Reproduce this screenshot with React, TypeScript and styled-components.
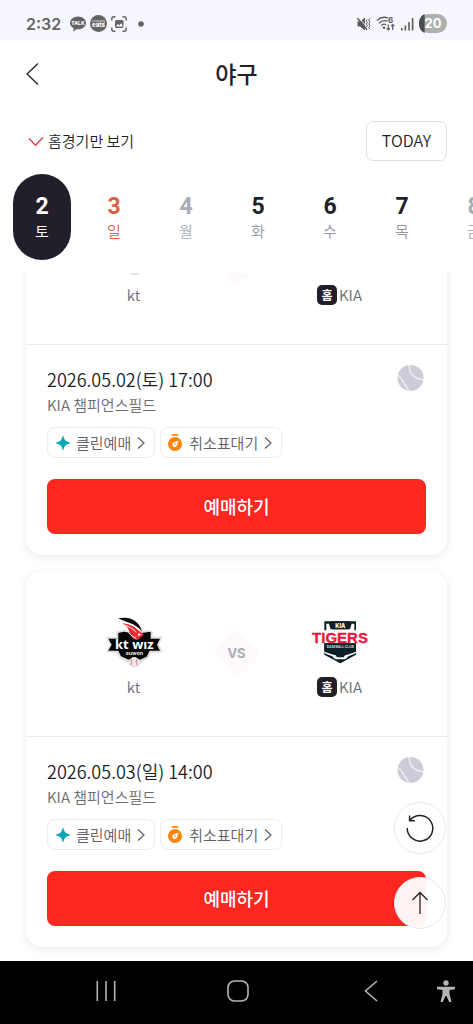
import { useLayoutEffect, useRef, useState } from "react";
import styled, { createGlobalStyle } from "styled-components";

const GlobalStyle = createGlobalStyle`
  *, *::before, *::after { box-sizing: border-box; }
  body { margin: 0; background: #fff; }
  button, input { font: inherit; color: inherit; }
  button { padding: 0; border: 0; background: none; cursor: pointer; }
  svg { display: block; flex: none; }
`;

const Screen = styled.div`
  display: flex;
  flex-direction: column;
  height: 100vh;
  overflow: hidden;
  background: #fff;
  color: #221f2a;
  font-family: "Noto Sans CJK KR", "Noto Sans", sans-serif;
  font-size: 15px;
  font-weight: 350;
`;

const StatusBar = styled.div`
  display: flex;
  justify-content: space-between;
  align-items: center;
  flex: none;
  height: 40px;
  padding: 7px 26px 0;
  background: #f6f6ff;
  color: #646464;
`;

const StatusGroup = styled.div<{ $gap: number }>`
  display: flex;
  align-items: center;
  gap: ${(p) => p.$gap}px;
`;

const Clock = styled.time`
  width: 40px;
  font: 600 16px/20px Inter, sans-serif;
`;

const Header = styled.header`
  display: grid;
  grid-template-columns: 40px 1fr 40px;
  align-items: center;
  flex: none;
  height: 68px;
  padding: 0 26px;
`;

const Title = styled.h1`
  margin: 0;
  padding-bottom: 2px;
  font-size: 23px;
  line-height: 32px;
  font-weight: 500;
  text-align: center;
`;

const FilterRow = styled.div`
  display: flex;
  justify-content: space-between;
  align-items: center;
  flex: none;
  padding: 13px 26px;
`;

const FilterLabel = styled.label`
  position: relative;
  display: flex;
  align-items: center;
  gap: 4px;
  padding-left: 2px;
  line-height: 24px;
  cursor: pointer;
`;

const HiddenCheckbox = styled.input`
  position: absolute;
  opacity: 0;
  width: 16px;
  height: 16px;
  margin: 0;
`;

const TodayButton = styled.button`
  width: 81px;
  height: 40px;
  padding-bottom: 2px;
  border: 1px solid #dfdde6;
  border-radius: 7px;
  background: #fff;
  font-size: 16px;
`;

const DateStrip = styled.nav`
  display: flex;
  flex: none;
  gap: 14px;
  padding: 0 0 13px 13px;
  overflow: hidden;
`;

type Tone = "normal" | "holiday" | "off";
const numberColor = { normal: "#221f2a", holiday: "#dd5f46", off: "#a9adb7" };
const dayColor = { normal: "#96999f", holiday: "#dd5f46", off: "#a9adb7" };

const DateButton = styled.button<{ $tone: Tone; $active: boolean }>`
  display: flex;
  flex-direction: column;
  align-items: center;
  justify-content: center;
  flex: none;
  width: 58px;
  height: 86px;
  padding-top: 2px;
  border-radius: 29px;
  background: ${(p) => (p.$active ? "#221f2a" : "transparent")};
  color: ${(p) => (p.$active ? "#fff" : dayColor[p.$tone])};
  line-height: 22px;

  strong {
    color: ${(p) => (p.$active ? "#fff" : numberColor[p.$tone])};
    font: 700 23px/26px Roboto, sans-serif;
  }
`;

const Body = styled.div`
  position: relative;
  display: flex;
  flex: 1;
  min-height: 0;
`;

const GameList = styled.main`
  flex: 1;
  padding: 14px 26px;
  overflow-y: auto;
  scrollbar-width: none;
`;

const Card = styled.article`
  border-radius: 16px;
  background: #fff;
  box-shadow: 0 2px 4px 2px rgba(60, 30, 50, 0.05), 0 2px 8px 4px rgba(200, 60, 160, 0.02);

  & + & { margin-top: 16px; }
`;

const Matchup = styled.div`
  display: flex;
  justify-content: center;
  gap: 30px;
  padding: 44px 0 37px;
  border-bottom: 1px solid #ebeaf4;
`;

const Team = styled.div`
  display: flex;
  flex-direction: column;
  align-items: center;
  gap: 6px;
  width: 100px;
`;

const TeamName = styled.div`
  display: flex;
  align-items: center;
  gap: 2px;
  line-height: 24px;
  color: #6a6e75;
`;

const HomeBadge = styled.span`
  width: 20px;
  height: 20px;
  border-radius: 5px;
  background: #221f2a;
  color: #fff;
  font-size: 12px;
  font-weight: 700;
  line-height: 20px;
  text-align: center;
`;

const Versus = styled.div`
  display: grid;
  place-items: center;
  width: 46px;
  height: 46px;
  margin-top: 15px;
  color: #abadb5;
  font: 700 13px/20px Inter, sans-serif;

  &::before, span { grid-area: 1 / 1; }
  &::before {
    content: "";
    width: 36px;
    height: 36px;
    border-radius: 8px;
    background: #fdf9fd;
    transform: rotate(45deg);
  }
  span { z-index: 1; }
`;

const Info = styled.div`
  padding: 20px 21px 21px;
`;

const InfoTop = styled.div`
  display: flex;
  justify-content: space-between;
  align-items: flex-start;
`;

const DateTime = styled.div`
  font-size: 18px;
  line-height: 28px;
`;

const Venue = styled.div`
  line-height: 24px;
  color: #6a6c72;
`;

const BallIcon = styled.svg`
  margin-right: 2px;
`;

const Tags = styled.div`
  display: flex;
  gap: 5px;
  margin: 10px 0 21px;
`;

const Tag = styled.button`
  display: flex;
  align-items: center;
  gap: 5px;
  height: 31px;
  padding: 0 8px 0 7px;
  border: 1px solid #ebeaf4;
  border-radius: 8px;
  color: #5d6067;
  line-height: 24px;
`;

const BookButton = styled.button`
  display: block;
  width: 100%;
  height: 55px;
  padding-bottom: 1px;
  border-radius: 8px;
  background: #fc2820;
  color: #fff;
  font-size: 18px;
  font-weight: 500;
`;

const FloatingActions = styled.div`
  position: absolute;
  right: 27px;
  bottom: 32px;
  display: flex;
  flex-direction: column;
  gap: 23px;
`;

const RoundButton = styled.button`
  display: grid;
  place-items: center;
  width: 52px;
  height: 52px;
  border: 1px solid #e9e8f5;
  border-radius: 50%;
  background: rgba(255, 255, 255, 0.95);
`;

const SystemNav = styled.nav`
  display: grid;
  grid-template-columns: 1fr 1fr 1fr 18px;
  justify-items: center;
  align-items: center;
  flex: none;
  height: 63px;
  padding: 0 18px 3px 40px;
  background: #000;
  color: #b9b4b4;
`;

function StatusLeft() {
  return (
    <StatusGroup $gap={4}>
      <Clock>2:32</Clock>
      <svg width="16" height="16" viewBox="0 0 16 16" fill="#646464">
        <path d="M8 .5C3.6.5 0 3.4 0 6.9c0 2.300 1.500 4.200 3.700 5.300L3 15.500l3.800-2.300 1.200.100c4.400 0 8-2.900 8-6.400S12.400.5 8 .5z" />
        <text x="8" y="8.800" fill="#fff" fontSize="5" fontWeight="800" fontFamily="Inter" textAnchor="middle">TALK</text>
      </svg>
      <svg width="17" height="17" viewBox="0 0 17 17">
        <circle cx="8.500" cy="8.500" r="8.500" fill="#646464" />
        <text x="8.500" y="6.500" fill="#c8c8c8" fontSize="3" fontWeight="700" fontFamily="Inter" textAnchor="middle">coupang</text>
        <text x="8.500" y="12" fill="#fff" fontSize="6" fontWeight="800" fontFamily="Inter" textAnchor="middle">eats</text>
      </svg>
      <svg width="16" height="16" viewBox="0 0 16 16" fill="none" stroke="#646464" strokeWidth="1.500">
        <path d="M.8 4.500V3Q.8.8 3 .8h1.500M11.500.8H13q2.200 0 2.200 2.200v1.500M15.200 11.500V13q0 2.200-2.200 2.200h-1.500M4.500 15.200H3Q.8 15.200.8 13v-1.500" />
        <rect x="4" y="4" width="8.500" height="8" rx="1.500" fill="#646464" stroke="none" />
        <path d="M5 10.500l2-2.500 1.500 1.500L10.300 7l1.500 3.500z" fill="#fff" stroke="none" />
      </svg>
      <svg width="20" height="6" viewBox="0 0 20 6">
        <circle cx="10" cy="3" r="2.800" fill="#646464" />
      </svg>
    </StatusGroup>
  );
}

function StatusRight() {
  return (
    <StatusGroup $gap={5}>
      <svg width="14" height="14" viewBox="0 0 14 14" fill="none" stroke="#5a5a5a">
        <path d="M.5 4.500H3l5-4v13l-5-4H.5z" fill="#5a5a5a" stroke="none" />
        <path d="M1.500 0l10 12" stroke="#f6f6ff" strokeWidth="1" />
        <path d="M.5 1.200L10 12.800" strokeWidth="1.500" />
        <path d="M10 2.500l-.8 1.500 1.200 1.500-1.200 1.500 1.200 1.500-1.200 1.800M12.600 1.500l-.8 1.800 1.200 1.800-1.200 1.900 1.200 1.800-1.200 1.700.8 1.500" />
      </svg>
      <svg width="20" height="15" viewBox="0 0 20 15" fill="none" stroke="#5a5a5a" strokeWidth="1.300">
        <path d="M1 4.500Q6-.300 12 2M3 7.200Q6.500 3.600 11.500 5.200M5.200 9.500q2.400-2.200 5-.8" />
        <circle cx="8" cy="11.800" r="1.200" fill="#5a5a5a" stroke="none" />
        <path d="M12.300 8.500v5.500M10.600 12.300l1.700 1.700 1.700-1.700M16.700 14V8.500M15 10.200l1.700-1.700 1.700 1.700" strokeWidth="1.200" />
        <text x="12" y="6.500" fill="#5a5a5a" stroke="none" fontSize="8" fontWeight="700" fontFamily="Inter">6</text>
      </svg>
      <svg width="13" height="14" viewBox="0 0 13 14" fill="#5a5a5a">
        <rect x="0" y="11" width="1.600" height="2.500" />
        <rect x="3.600" y="8.500" width="1.600" height="5" />
        <rect x="7.200" y="5.200" width="1.600" height="8.300" />
        <rect x="10.800" y="1" width="1.600" height="12.500" />
      </svg>
      <svg width="28" height="19" viewBox="0 0 28 19">
        <rect width="28" height="19" rx="9.500" fill="#adb0af" />
        <path d="M5.600 0v19C2 17.500 0 14 0 9.500S2 1.500 5.600 0z" fill="#4c4c4c" />
        <text x="14" y="14.200" fill="#fff" fontSize="13" fontWeight="700" fontFamily="Inter" textAnchor="middle">20</text>
      </svg>
    </StatusGroup>
  );
}

function KtWizLogo() {
  return (
    <svg width="58" height="54" viewBox="45 45 174 162" role="img" aria-label="kt wiz">
      <path d="M48 110h30V94l22-4 32 4 42-4 14 6v14h30l-11 24 11 22-33 3-10 16-22 13q-20 28-38 1l-24-13-10-17-33-3 12-22z" fill="#e3dde3" />
      <path d="M55 116h30V99l16-4 26 4h28l27-4v21h28l-9 18 9 18h-31l-9 18-20 9-13-7h-8l-13 7-23-10-8-17H55l10-18z" fill="#050505" />
      <path d="M84 55q34-7 54 10 14 12 18 30-16-20-37-26-15-5-35-14z" fill="#0a0a0a" />
      <path d="M98 70q27 2 46 20l18 14-20 17q-17-2-23-22-4-18-21-29z" fill="#ee2b34" />
      <path d="M104 76q24 7 34 21M112 88q6 20 26 26" stroke="#fff" strokeWidth="3" fill="none" />
      <path d="M144 100l10 3-9 6z" fill="#fff" />
      <circle cx="132" cy="186" r="14" fill="#eee6e8" />
      <path d="M122 176q7 10 0 20M142 176q-7 10 0 20" stroke="#e04a50" strokeWidth="2" fill="none" />
      <text x="133" y="148" fill="#fff" fontSize="39" fontWeight="700" fontFamily="Open Sans" textAnchor="middle">kt wız</text>
      <text x="133" y="164" fill="#e8e8e8" fontSize="16" fontWeight="700" fontFamily="Inter" textAnchor="middle">suwon</text>
    </svg>
  );
}

function TigersLogo() {
  return (
    <svg width="58" height="54" viewBox="330 45 174 162" role="img" aria-label="KIA Tigers">
      <path d="M370 64h95v98l-47 27-48-27z" fill="#0c2026" />
      <path d="M376 71h8l5 17h58l5-17h8v24h-84z" fill="#fff" />
      <path d="M389 64h57l-4 24h-49z" fill="#0c2026" />
      <path d="M366 91h103v39H366z" fill="#fff" />
      <path d="M370 130h95v24l-22 6-10 2h-30l-10-2-23-6z" fill="#0c2026" />
      <path d="M370 155l22 8 12 3 4 6h20l4-6 12-3 21-8v5l-47 27-48-27z" fill="#fff" />
      <path d="M370 160l24 9 8 9h32l8-9 23-9v4l-47 26-48-26z" fill="#0c2026" />
      <text x="418" y="84" fill="#fff" fontSize="17" fontWeight="800" fontFamily="Inter" textAnchor="middle">KIA</text>
      <text x="417" y="128" fill="#e9193d" stroke="#e9193d" strokeWidth="1" fontSize="45" fontWeight="700" fontFamily="Liberation Sans" textAnchor="middle">TIGERS</text>
      <text x="418" y="143" fill="#d5dcde" fontSize="10" fontWeight="700" fontFamily="Inter" textAnchor="middle">BASEBALL CLUB</text>
    </svg>
  );
}

function Chevron() {
  return (
    <svg width="10" height="14" viewBox="0 0 10 14" fill="none" stroke="#5d6067" strokeWidth="1.200">
      <path d="M2 1.500L8 7l-6 5.500" />
    </svg>
  );
}

function GameCard({ date, time }: { date: string; time: string }) {
  return (
    <Card>
      <Matchup>
        <Team>
          <KtWizLogo />
          <TeamName>kt</TeamName>
        </Team>
        <Versus><span>VS</span></Versus>
        <Team>
          <TigersLogo />
          <TeamName><HomeBadge>홈</HomeBadge>KIA</TeamName>
        </Team>
      </Matchup>
      <Info>
        <InfoTop>
          <div>
            <DateTime>{date} {time}</DateTime>
            <Venue>KIA 챔피언스필드</Venue>
          </div>
          <BallIcon width="27" height="27" viewBox="0 0 27 27">
            <circle cx="13.500" cy="13" r="13" fill="#cccbd8" />
            <path d="M12.500 0Q11.500 7 17 11.500 21 14.500 26.500 15M.5 10Q4 12 6.500 17T12 26" fill="none" stroke="#f4f2f8" strokeWidth="1.300" />
          </BallIcon>
        </InfoTop>
        <Tags>
          <Tag type="button">
            <svg width="16" height="16" viewBox="0 0 16 16" fill="#0ba5b8">
              <path d="M8 .3q1.200 4.500 2.800 5.600L15.700 8l-4.900 2.100Q9.200 11.200 8 15.700 6.800 11.200 5.200 10.100L.3 8l4.900-2.100Q6.800 4.800 8 .3z" />
            </svg>
            클린예매
            <Chevron />
          </Tag>
          <Tag type="button">
            <svg width="16" height="18" viewBox="0 0 16 18">
              <rect x="3.500" y="0" width="7" height="2" rx="1" fill="#fd9a1e" />
              <circle cx="7" cy="10" r="7" fill="#fd8406" />
              <path d="M10.500 6.500L8.900 11.500a2.400 2.400 0 1 1-3.300-3z" fill="#fff" />
              <circle cx="7.100" cy="10" r=".8" fill="#fd8406" />
            </svg>
            취소표대기
            <Chevron />
          </Tag>
        </Tags>
        <BookButton type="button">예매하기</BookButton>
      </Info>
    </Card>
  );
}

const days: { number: number; day: string; tone: Tone }[] = [
  { number: 2, day: "토", tone: "normal" },
  { number: 3, day: "일", tone: "holiday" },
  { number: 4, day: "월", tone: "off" },
  { number: 5, day: "화", tone: "normal" },
  { number: 6, day: "수", tone: "normal" },
  { number: 7, day: "목", tone: "normal" },
  { number: 8, day: "금", tone: "off" },
];

export default function App() {
  const listRef = useRef<HTMLElement>(null);
  const [selected, setSelected] = useState(2);
  const [homeOnly, setHomeOnly] = useState(true);

  useLayoutEffect(() => {
    const list = listRef.current;
    if (list) list.scrollTop = list.scrollHeight;
  }, []);

  return (
    <Screen>
      <GlobalStyle />
      <StatusBar>
        <StatusLeft />
        <StatusRight />
      </StatusBar>
      <Header>
        <button type="button" aria-label="뒤로">
          <svg width="14" height="24" viewBox="0 0 14 24" fill="none" stroke="#221f2a" strokeWidth="1.300">
            <path d="M12 1.500L1 12l11 10.500" />
          </svg>
        </button>
        <Title>야구</Title>
      </Header>
      <FilterRow>
        <FilterLabel>
          <HiddenCheckbox type="checkbox" checked={homeOnly} onChange={(e) => setHomeOnly(e.target.checked)} />
          <svg width="16" height="12" viewBox="0 0 16 12" fill="none" stroke={homeOnly ? "#f0343c" : "#b9b9c2"} strokeWidth="1.300">
            <path d="M1 3.500L7.500 10.300 15 2.500" />
          </svg>
          홈경기만 보기
        </FilterLabel>
        <TodayButton type="button">TODAY</TodayButton>
      </FilterRow>
      <DateStrip>
        {days.map((d) => (
          <DateButton
            key={d.number}
            type="button"
            $tone={d.tone}
            $active={d.number === selected}
            onClick={() => setSelected(d.number)}
          >
            <strong>{d.number}</strong>
            {d.day}
          </DateButton>
        ))}
      </DateStrip>
      <Body>
        <GameList ref={listRef}>
          <GameCard date="2026.05.02(토)" time="17:00" />
          <GameCard date="2026.05.03(일)" time="14:00" />
        </GameList>
        <FloatingActions>
          <RoundButton type="button" aria-label="새로고침">
            <svg width="30" height="30" viewBox="0 0 30 30" fill="none" stroke="#222" strokeWidth="1.500">
              <path d="M2.200 15A12.800 12.800 0 1 0 5 7.300M4.600 2.500v5.300h5.300" />
            </svg>
          </RoundButton>
          <RoundButton type="button" aria-label="맨 위로">
            <svg width="18" height="24" viewBox="0 0 18 24" fill="none" stroke="#222" strokeWidth="1.300">
              <path d="M9 23V1.500M1.500 9L9 1.500 16.500 9" />
            </svg>
          </RoundButton>
        </FloatingActions>
      </Body>
      <SystemNav>
        <button type="button" aria-label="최근 앱">
          <svg width="20" height="20" viewBox="0 0 20 20" stroke="#b9b4b4" strokeWidth="1.600">
            <path d="M1.300 0v20M10 0v20M18.700 0v20" />
          </svg>
        </button>
        <button type="button" aria-label="홈">
          <svg width="22" height="22" viewBox="0 0 22 22" fill="none" stroke="#b9b4b4" strokeWidth="1.600">
            <rect x="1" y="1" width="20" height="20" rx="6.500" />
          </svg>
        </button>
        <button type="button" aria-label="이전">
          <svg width="14" height="22" viewBox="0 0 14 22" fill="none" stroke="#b9b4b4" strokeWidth="1.600">
            <path d="M13 1L1.500 11 13 21" />
          </svg>
        </button>
        <button type="button" aria-label="접근성">
          <svg width="18" height="24" viewBox="0 0 18 24" fill="#b9b4b4">
            <circle cx="9" cy="4" r="2.700" />
            <path d="M0 7.700h18v2.500l-5.500.7v4l2 8h-2.300L9.500 17h-1l-2.700 5.900H3.500l2-8v-4L0 10.200z" />
          </svg>
        </button>
      </SystemNav>
    </Screen>
  );
}
